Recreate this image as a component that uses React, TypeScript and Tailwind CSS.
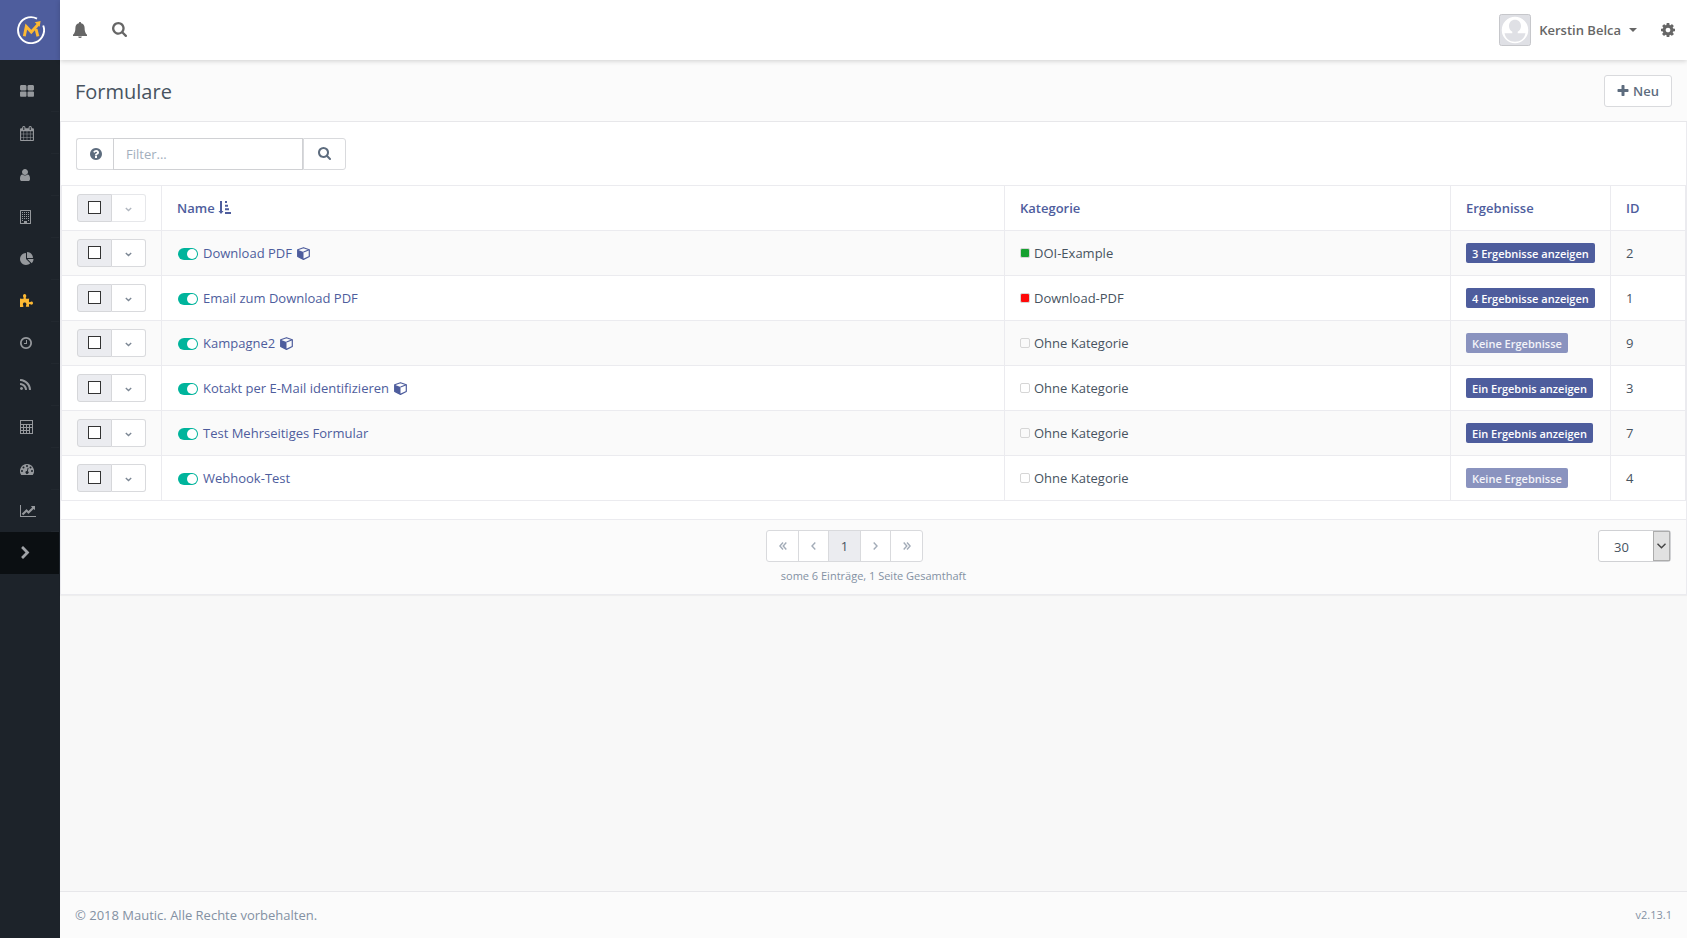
import type { ReactNode } from 'react'

type IconProps = { className?: string }

type FormRow = {
  id: number
  name: string
  cube?: boolean
  category: string
  color?: string
  label: string
  empty?: boolean
}

const rows: FormRow[] = [
  { id: 2, name: 'Download PDF', cube: true, category: 'DOI-Example', color: 'bg-[#15a02f]', label: '3 Ergebnisse anzeigen' },
  { id: 1, name: 'Email zum Download PDF', category: 'Download-PDF', color: 'bg-[#ff0909]', label: '4 Ergebnisse anzeigen' },
  { id: 9, name: 'Kampagne2', cube: true, category: 'Ohne Kategorie', label: 'Keine Ergebnisse', empty: true },
  { id: 3, name: 'Kotakt per E-Mail identifizieren', cube: true, category: 'Ohne Kategorie', label: 'Ein Ergebnis anzeigen' },
  { id: 7, name: 'Test Mehrseitiges Formular', category: 'Ohne Kategorie', label: 'Ein Ergebnis anzeigen' },
  { id: 4, name: 'Webhook-Test', category: 'Ohne Kategorie', label: 'Keine Ergebnisse', empty: true },
]

// Glyphs on the 1792 unit grid
const glyphs = {
  thLarge: 'M832 1024v384q0 52-38 90t-90 38h-512q-52 0-90-38t-38-90v-384q0-52 38-90t90-38h512q52 0 90 38t38 90zm0-768v384q0 52-38 90t-90 38h-512q-52 0-90-38t-38-90v-384q0-52 38-90t90-38h512q52 0 90 38t38 90zm896 768v384q0 52-38 90t-90 38h-512q-52 0-90-38t-38-90v-384q0-52 38-90t90-38h512q52 0 90 38t38 90zm0-768v384q0 52-38 90t-90 38h-512q-52 0-90-38t-38-90v-384q0-52 38-90t90-38h512q52 0 90 38t38 90z',
  calendar: 'M192 1664h288v-288h-288v288zm352 0h320v-288h-320v288zm-352-352h288v-320h-288v320zm352 0h320v-320h-320v320zm-352-384h288v-288h-288v288zm736 736h320v-288h-320v288zm-384-736h320v-288h-320v288zm768 736h288v-288h-288v288zm-384-352h320v-320h-320v320zm-352-864v-288q0-13-9.5-22.5t-22.5-9.5h-64q-13 0-22.5 9.5t-9.5 22.5v288q0 13 9.5 22.5t22.5 9.5h64q13 0 22.5-9.5t9.5-22.5zm736 864h288v-320h-288v320zm-384-384h320v-288h-320v288zm384 0h288v-288h-288v288zm32-480v-288q0-13-9.5-22.5t-22.5-9.5h-64q-13 0-22.5 9.5t-9.5 22.5v288q0 13 9.5 22.5t22.5 9.5h64q13 0 22.5-9.5t9.5-22.5zm384-64v1280q0 52-38 90t-90 38h-1408q-52 0-90-38t-38-90v-1280q0-52 38-90t90-38h128v-96q0-66 47-113t113-47h64q66 0 113 47t47 113v96h384v-96q0-66 47-113t113-47h64q66 0 113 47t47 113v96h128q52 0 90 38t38 90z',
  user: 'M1536 1399q0 109-62.5 187t-150.5 78h-854q-88 0-150.5-78t-62.5-187q0-85 8.5-160.5t31.5-152 58.5-131 94-89 134.5-34.5q131 128 313 128t313-128q76 0 134.5 34.5t94 89 58.5 131 31.5 152 8.5 160.5zm-256-887q0 159-112.5 271.5t-271.5 112.5-271.5-112.5-112.5-271.5 112.5-271.5 271.5-112.5 271.5 112.5 112.5 271.5z',
  pie: 'M768 890l546 546q-106 108-247.5 168t-298.5 60q-209 0-385.5-103t-279.5-279.5-103-385.5 103-385.5 279.5-279.5 385.5-103v762zm187 6h773q0 157-60 298.5t-168 247.5zm709-128h-768v-768q209 0 385.5 103t279.5 279.5 103 385.5z',
  clock: 'M1024 544v448q0 14-9 23t-23 9h-320q-14 0-23-9t-9-23v-64q0-14 9-23t23-9h224v-352q0-14 9-23t23-9h64q14 0 23 9t9 23zm416 352q0-148-73-273t-198-198-273-73-273 73-198 198-73 273 73 273 198 198 273 73 273-73 198-198 73-273zm224 0q0 209-103 385.5t-279.5 279.5-385.5 103-385.5-103-279.5-279.5-103-385.5 103-385.5 279.5-279.5 385.5-103 385.5 103 279.5 279.5 103 385.5z',
  rss: 'M576 1344q0 80-56 136t-136 56-136-56-56-136 56-136 136-56 136 56 56 136zm512 123q2 28-17 48-18 21-47 21h-135q-25 0-43-16.5t-20-41.5q-22-229-184.5-391.5t-391.5-184.5q-25-2-41.5-20t-16.5-43v-135q0-29 21-47 17-17 43-17h5q160 13 306 80.5t259 181.5q114 113 181.5 259t80.5 306zm512 2q2 27-18 47-18 20-46 20h-143q-26 0-44.5-17.5t-19.5-42.5q-12-215-101-408.5t-231.5-336-336-231.5-408.5-102q-25-1-42.5-19.5t-17.5-43.5v-143q0-28 20-46 18-18 44-18h3q262 13 501.5 120t425.5 294q187 186 294 425.5t120 501.5z',
  lineChart: 'M2048 1536v128h-2048v-1536h128v1408h1920zm-128-1248v435q0 21-19.5 29.5t-35.5-7.5l-121-121-633 633q-10 10-23 10t-23-10l-233-233-416 416-192-192 585-585q10-10 23-10t23 10l233 233 464-464-121-121q-16-16-7.5-35.5t29.5-19.5h435q14 0 23 9t9 23z',
  chevron: 'M1363 877l-742 742q-19 19-45 19t-45-19l-166-166q-19-19-19-45t19-45l531-531-531-531q-19-19-19-45t19-45l166-166q19-19 45-19t45 19l742 742q19 19 19 45t-19 45z',
  search: 'M1216 832q0-185-131.5-316.5t-316.5-131.5-316.5 131.5-131.5 316.5 131.5 316.5 316.5 131.5 316.5-131.5 131.5-316.5zm512 832q0 52-38 90t-90 38q-54 0-90-38l-343-342q-179 124-399 124-143 0-273.5-55.5t-225-150-150-225-55.5-273.5 55.5-273.5 150-225 225-150 273.5-55.5 273.5 55.5 225 150 150 225 55.5 273.5q0 220-124 399l343 343q37 37 37 90z',
  question: 'M1024 1376v-192q0-14-9-23t-23-9h-192q-14 0-23 9t-9 23v192q0 14 9 23t23 9h192q14 0 23-9t9-23zm256-672q0-88-55.5-163t-138.5-116-170-41q-243 0-371 213-15 24 8 42l132 100q7 6 19 6 16 0 25-12 53-68 86-92 34-24 86-24 48 0 85.5 26t37.5 59q0 38-20 61t-68 45q-63 28-115.5 86.5t-52.5 125.5v36q0 14 9 23t23 9h192q14 0 23-9t9-23q0-19 21.5-49.5t54.5-49.5q32-18 49-28.5t46-35 44.5-48 28-60.5 12.5-81zm384 192q0 209-103 385.5t-279.5 279.5-385.5 103-385.5-103-279.5-279.5-103-385.5 103-385.5 279.5-279.5 385.5-103 385.5 103 279.5 279.5 103 385.5z',
  plus: 'M1600 736v192q0 40-28 68t-68 28h-416v416q0 40-28 68t-68 28h-192q-40 0-68-28t-28-68v-416h-416q-40 0-68-28t-28-68v-192q0-40 28-68t68-28h416v-416q0-40 28-68t68-28h192q40 0 68 28t28 68v416h416q40 0 68 28t28 68z',
  cog: 'M1152 896q0-106-75-181t-181-75-181 75-75 181 75 181 181 75 181-75 75-181zm512-109v222q0 12-8 23t-20 13l-185 28q-19 54-39 91 35 50 107 138 10 12 10 25t-9 23q-27 37-99 108t-94 71q-12 0-26-9l-138-108q-44 23-91 38-16 136-29 186-7 28-36 28h-222q-14 0-24.5-8.5t-11.5-21.5l-28-184q-49-16-90-37l-141 107q-10 9-25 9-14 0-25-11-126-114-165-168-7-10-7-23 0-12 8-23 15-21 51-66.5t54-70.5q-27-50-41-99l-183-27q-13-2-21-12.5t-8-23.5v-222q0-12 8-23t19-13l186-28q14-46 39-92-40-57-107-138-10-12-10-24 0-10 9-23 26-36 98.5-107.5t94.5-71.5q13 0 26 10l138 107q44-23 91-38 16-136 29-186 7-28 36-28h222q14 0 24.5 8.5t11.5 21.5l28 184q49 16 90 37l142-107q9-9 24-9 13 0 25 10 129 119 165 170 7 8 7 22 0 12-8 23-15 21-51 66.5t-54 70.5q26 50 41 98l183 28q13 2 21 12.5t8 23.5z',
}

function Glyph({ d, box, className }: { d: string; box: string; className?: string }) {
  return (
    <svg viewBox={box} className={className} fill="currentColor" aria-hidden="true">
      <path d={d} />
    </svg>
  )
}

function Logo() {
  return (
    <svg viewBox="0 0 28 28" className="h-7 w-7" fill="none" aria-hidden="true">
      <path d="M20 2.600A13 13 0 1 0 26.200 9.500" stroke="#fff" strokeWidth="1.900" />
      <path d="M7.300 20.300 9.300 10.500l5 5.500 7-7.800" stroke="#fdb933" strokeWidth="2.900" />
      <path d="M17.700 6.200 23.600 5l-.9 5.800z" fill="#fdb933" />
      <path d="m19 13 1.900 7.300" stroke="#fdb933" strokeWidth="2.900" />
    </svg>
  )
}

function Bell({ className }: IconProps) {
  return (
    <svg viewBox="0 0 14 16" className={className} fill="currentColor" aria-hidden="true">
      <path d="M7 0c.7 0 1.1.5 1.1 1.200 2.200.5 3.500 2.200 3.500 4.500 0 3.300.6 5.300 2.400 7V14H0v-1.300c1.800-1.700 2.400-3.700 2.400-7 0-2.300 1.300-4 3.500-4.500C5.900.5 6.300 0 7 0zM5.200 14.400h3.600a1.800 1.600 0 0 1-3.600 0z" />
    </svg>
  )
}

function Building({ className }: IconProps) {
  return (
    <svg viewBox="0 0 11 14" className={className} fill="currentColor" aria-hidden="true">
      <path fillRule="evenodd" d="M0 .5Q0 0 .5 0h10q.5 0 .5.500v13q0 .5-.5.500H.5q-.5 0-.5-.5zM1 1v12h3v-2h3v2h3V1z" />
      {[2, 4, 6, 8].map((y) => (
        <path key={y} d={`M2 ${y}h1v1H2zm2 0h1v1H4zm2 0h1v1H6zm2 0h1v1H8z`} />
      ))}
      <path d="M2 10h1v1H2zm6 0h1v1H8z" />
    </svg>
  )
}

function Puzzle({ className }: IconProps) {
  return (
    <svg viewBox="0 0 13 14" className={className} fill="currentColor" aria-hidden="true">
      <path d="M0 4.500c1 .3 3 .5 3.600 0 .5-.6-.6-1.200-.6-2.500C3 .8 3.700 0 4.600 0S6.300.8 6.300 2c0 1.200-1 1.900-.4 2.500.7.5 2.300.2 3.300 0-.2 1.200-.5 2.900 0 3.600.5.5 1.200-.7 2.200-.7S13 8 13 9s-.6 1.700-1.600 1.700-1.600-.9-2.200-.5c-.4.4-.2 1.600 0 2.600H6.100c-.7-.5.3-1.200.3-2.500 0-1.100-.8-1.700-1.800-1.700s-1.700.6-1.700 1.700c0 1.300 1 1.900.4 2.500-.5.3-2.300.2-3.300.2z" />
    </svg>
  )
}

function Calculator({ className }: IconProps) {
  return (
    <svg viewBox="0 0 13 14" className={className} fill="currentColor" aria-hidden="true">
      <path fillRule="evenodd" d="M0 0h13v14H0zM1 1v3h11V1zM1 5v2h2V5zm3 0v2h2V5zm3 0v2h2V5zm3 0v2h2V5zM1 8v2h2V8zm3 0v2h2V8zm3 0v2h2V8zM1 11v2h2v-2zm3 0v2h2v-2zm3 0v2h2v-2zm3-3v5h2V8z" />
    </svg>
  )
}

function Gauge({ className }: IconProps) {
  return (
    <svg viewBox="0 -1 14 13" className={className} fill="currentColor" aria-hidden="true">
      <path
        fillRule="evenodd"
        d="M7 0a7 7 0 0 1 5.900 10.800q-.2.200-.5.200H1.600q-.3 0-.5-.2A7 7 0 0 1 7 0zM2 6a1 1 0 1 0 0 2 1 1 0 0 0 0-2zm1.500-3.500a1 1 0 1 0 0 2 1 1 0 0 0 0-2zM7 1a1 1 0 1 0 0 2 1 1 0 0 0 0-2zm3.500 1.500a1 1 0 1 0 0 2 1 1 0 0 0 0-2zM12 6a1 1 0 1 0 0 2 1 1 0 0 0 0-2zM7.700 3.800 6.900 7a1.500 1.500 0 1 0 .9.200l.8-3.200z"
      />
    </svg>
  )
}

function SortAsc({ className }: IconProps) {
  return (
    <svg viewBox="0 0 13 14" className={className} fill="currentColor" aria-hidden="true">
      <path d="M2 0h2v10h1.500L3 13 .5 10H2zM7 0h2v2H7zm0 3.700h3v2H7zm0 3.600h4v2H7zM7 11h6v2H7z" />
    </svg>
  )
}

function Toggle() {
  return (
    <svg viewBox="0 0 20 13" className="h-[13px] w-5" aria-hidden="true">
      <rect y="1" width="20" height="12" rx="6" fill="#00b49c" />
      <circle cx="14" cy="7" r="5" fill="#fff" />
    </svg>
  )
}

function Cube() {
  return (
    <svg viewBox="0 0 13 13" className="h-[13px] w-[13px]" aria-hidden="true">
      <path d="M6.500.7 12.300 2.800v6.700l-5.800 2.900L.7 9.500V2.800z" fill="none" stroke="currentColor" strokeWidth="1.200" strokeLinejoin="round" />
      <path d="M.6 2.800 6.500 5v7.500L.6 9.600z" fill="currentColor" />
      <path d="M6.500 5l5.800-2.200" stroke="currentColor" strokeWidth="1.200" />
    </svg>
  )
}

function Angle({ d, box, className }: { d: string; box: string; className?: string }) {
  return (
    <svg viewBox={box} className={className} fill="none" stroke="currentColor" strokeWidth="1.400" aria-hidden="true">
      <path d={d} />
    </svg>
  )
}

function Avatar() {
  return (
    <svg viewBox="0 0 32 32" className="h-8 w-8" aria-hidden="true">
      <rect x=".5" y=".5" width="31" height="31" rx="2" fill="#dfe0e5" stroke="#c6c7cb" />
      <circle cx="16" cy="16" r="12.500" fill="#fff" stroke="#fff" strokeWidth="1.500" />
      <path d="M16 5.800c3.600 0 6 2.600 6 6.200 0 2.600-1.300 4.600-3.300 5.800v1.400h7.800c-1 5-5 8.500-10.500 8.500S6.500 24.200 5.500 19.200h7.800v-1.400C11.300 16.600 10 14.600 10 12c0-3.600 2.400-6.200 6-6.200z" fill="#dfe0e5" />
    </svg>
  )
}

const navItems: { title: string; icon: ReactNode; active?: boolean }[] = [
  { title: 'Dashboard', icon: <Glyph d={glyphs.thLarge} box="64 0 1664 1792" className="h-[15px] w-3.5" /> },
  { title: 'Kalender', icon: <Glyph d={glyphs.calendar} box="64 0 1664 1792" className="h-[15px] w-3.5" /> },
  { title: 'Kontakte', icon: <Glyph d={glyphs.user} box="256 0 1280 1792" className="h-3.5 w-2.5" /> },
  { title: 'Unternehmen', icon: <Building className="h-3.5 w-[11px]" /> },
  { title: 'Segmente', icon: <Glyph d={glyphs.pie} box="0 0 1792 1792" className="h-3.5 w-3.5" /> },
  { title: 'Komponenten', icon: <Puzzle className="h-3.5 w-[13px]" />, active: true },
  { title: 'Kampagnen', icon: <Glyph d={glyphs.clock} box="128 0 1536 1792" className="h-3.5 w-3" /> },
  { title: 'Kanäle', icon: <Glyph d={glyphs.rss} box="192 0 1408 1792" className="h-3.5 w-[11px]" /> },
  { title: 'Punkte', icon: <Calculator className="h-3.5 w-[13px]" /> },
  { title: 'Stufen', icon: <Gauge className="h-[13px] w-3.5" /> },
  { title: 'Berichte', icon: <Glyph d={glyphs.lineChart} box="0 0 2048 1792" className="h-3.5 w-4" /> },
]

function Sidebar() {
  return (
    <aside className="flex w-[60px] shrink-0 flex-col bg-[#1d232a]">
      <a href="#" aria-label="Mautic" className="flex h-[60px] items-center justify-center bg-[#4e5d9d] pl-0.5">
        <Logo />
      </a>
      <nav className="flex flex-col pt-2.5 pr-px">
        {navItems.map((item) => (
          <a
            key={item.title}
            href="#"
            aria-label={item.title}
            className={`flex h-[42px] items-center pl-5 ${item.active ? 'text-[#fdb933]' : 'text-[#96999d]'}`}
          >
            {item.icon}
            <span className="ml-auto w-2 self-end border-b border-[#22282f]" />
          </a>
        ))}
        <button type="button" aria-label="Menü ausklappen" className="flex h-[42px] items-center bg-[#0b0f12] pl-[21px] text-[#a0a3a7]">
          <Glyph d={glyphs.chevron} box="320 0 1152 1792" className="h-3.5 w-[9px]" />
        </button>
      </nav>
    </aside>
  )
}

function TopBar() {
  return (
    <header className="relative flex h-[60px] items-center bg-white pr-3 pb-px pl-[13px] text-[#666] shadow-[0_1px_5px_rgba(0,0,0,0.18)]">
      <button type="button" aria-label="Benachrichtigungen">
        <Bell className="h-4 w-3.5" />
      </button>
      <button type="button" aria-label="Suche" className="ml-[25px]">
        <Glyph d={glyphs.search} box="64 128 1664 1664" className="h-[15px] w-[15px]" />
      </button>
      <button type="button" className="ml-auto flex items-center pt-px text-[13px] font-semibold">
        <Avatar />
        <span className="ml-2">Kerstin Belca</span>
        <svg viewBox="0 0 8 4" className="ml-2 h-1 w-2" fill="currentColor" aria-hidden="true">
          <path d="M0 0h8L4 4z" />
        </svg>
      </button>
      <button type="button" aria-label="Einstellungen" className="ml-6">
        <Glyph d={glyphs.cog} box="128 128 1536 1536" className="h-3.5 w-3.5" />
      </button>
    </header>
  )
}

function RowActions({ label, disabled }: { label: string; disabled?: boolean }) {
  return (
    <div className="flex h-7 w-[69px]">
      <label className="flex w-[35px] items-center justify-center rounded-l-[3px] border border-[#d6d7da] bg-[#ebecf0] pb-px">
        <input
          type="checkbox"
          aria-label={label}
          className="h-[13px] w-[13px] appearance-none border border-[#333] bg-white checked:bg-[#4e5d9d]"
        />
      </label>
      <button
        type="button"
        aria-label={`${label} Optionen`}
        disabled={disabled}
        className={`flex flex-1 items-center justify-center rounded-r-[3px] border border-l-0 bg-white ${
          disabled ? 'border-[#e6e7ea] text-[#b0b6bf]' : 'border-[#d9dadd] text-[#7c8794]'
        }`}
      >
        <Angle box="0 0 7 5" d="m.8 1 2.700 2.500L6.200 1" className="mt-0.5 h-[5px] w-[7px]" />
      </button>
    </div>
  )
}

function FormTable() {
  return (
    <table className="w-full table-fixed border-separate border-spacing-0 border-x border-t border-[#ebebef] text-left">
      <thead>
        <tr className="h-[45px] text-[#4e5d9d] *:border-b *:border-[#ebebef] *:font-semibold">
          <th className="w-[100px] border-r pl-[15px]">
            <RowActions label="Alle auswählen" disabled />
          </th>
          <th className="border-r pl-[15px]">
            <a href="#" className="flex items-center gap-[3px]">
              Name
              <SortAsc className="h-3.5 w-[13px]" />
            </a>
          </th>
          <th className="w-[446px] border-r pl-[15px]">
            <a href="#">Kategorie</a>
          </th>
          <th className="w-[160px] border-r pl-[15px]">
            <a href="#">Ergebnisse</a>
          </th>
          <th className="w-[74px] pl-[15px]">
            <a href="#">ID</a>
          </th>
        </tr>
      </thead>
      <tbody>
        {rows.map((row) => (
          <tr key={row.id} className="h-[45px] odd:bg-[#fafafa] *:border-b *:border-[#ebebef] *:pl-[15px]">
            <td className="border-r">
              <RowActions label={row.name} />
            </td>
            <td className="border-r">
              <div className="flex items-center gap-[5px] pl-px text-[#4e5d9d]">
                <Toggle />
                <a href="#" className="flex items-center gap-[5px]">
                  {row.name}
                  {row.cube && <Cube />}
                </a>
              </div>
            </td>
            <td className="border-r">
              <div className="flex items-center gap-1">
                <span className={`h-2.5 w-2.5 rounded-[2px] border border-[#d6d6d6] ${row.color ?? ''}`} />
                {row.category}
              </div>
            </td>
            <td className="border-r">
              <a
                href="#"
                className={`flex h-5 w-fit items-center rounded-[2px] px-1.5 pt-0.5 text-[11px] font-semibold whitespace-nowrap ${
                  row.empty ? 'bg-[#8a93bf] text-[#f3f4f9]' : 'bg-[#4e5d9d] text-white'
                }`}
              >
                {row.label}
              </a>
            </td>
            <td>{row.id}</td>
          </tr>
        ))}
      </tbody>
    </table>
  )
}

function Pagination() {
  return (
    <div className="mx-auto w-[215px]">
      <div className="flex h-8 w-[157px] divide-x divide-[#d9dadd] overflow-hidden rounded-[3px] border border-[#d9dadd] bg-white text-[#a3acb8] *:flex *:items-center *:justify-center">
        <button type="button" aria-label="Erste Seite" className="w-8">
          <Angle box="0 0 8 8" d="M4 .5.900 4 4 7.500M7.300.5 4.200 4l3.100 3.500" className="h-2 w-2" />
        </button>
        <button type="button" aria-label="Vorherige Seite" className="w-[30px]">
          <Angle box="0 0 5 8" d="M4.300.5 1 4l3.300 3.500" className="h-2 w-[5px]" />
        </button>
        <button type="button" aria-current="page" className="w-8 bg-[#ebecf0] text-[#47535f]">
          1
        </button>
        <button type="button" aria-label="Nächste Seite" className="w-[30px]">
          <Angle box="0 0 5 8" d="M.7.500 4 4 .7 7.500" className="h-2 w-[5px]" />
        </button>
        <button type="button" aria-label="Letzte Seite" className="flex-1">
          <Angle box="0 0 8 8" d="M.7.500 3.800 4 .7 7.500M4 .5 7.100 4 4 7.500" className="h-2 w-2" />
        </button>
      </div>
      <p className="mt-1.5 text-center text-[11px] leading-4 text-[#8391a3]">some 6 Einträge, 1 Seite Gesamthaft</p>
    </div>
  )
}

export default function App() {
  return (
    <div className="flex min-h-screen bg-[#f8f8f8] font-['Open_Sans','Noto_Sans',sans-serif] text-[13px] leading-5 text-[#47535f]">
      <Sidebar />
      <div className="flex min-w-0 flex-1 flex-col">
        <TopBar />
        <div className="flex h-[62px] items-center justify-between border-b border-[#e7e7ea] bg-[#fbfbfb] px-[15px]">
          <h1 className="pt-0.5 text-[20px] leading-6">Formulare</h1>
          <a
            href="#"
            className="flex h-8 items-center gap-1 rounded-[3px] border border-[#d9dadd] bg-white px-3 font-semibold text-[#5d6c7e]"
          >
            <Glyph d={glyphs.plus} box="192 128 1408 1536" className="h-3 w-3" />
            Neu
          </a>
        </div>

        <main>
          <section className="border-x border-b border-[#ebebef] bg-white shadow-[0_1px_1px_rgba(0,0,0,0.04)]">
            <form className="flex h-[63px] items-center px-[15px]" onSubmit={(e) => e.preventDefault()}>
              <button
                type="button"
                aria-label="Hilfe"
                className="flex h-8 w-[37px] items-center justify-center rounded-l-[3px] border border-r-0 border-[#d9dadd] pl-px text-[#5d6c7e]"
              >
                <Glyph d={glyphs.question} box="128 128 1536 1536" className="h-3 w-3" />
              </button>
              <input
                type="text"
                aria-label="Filter"
                placeholder="Filter..."
                className="h-8 w-[190px] border border-[#d0d1d4] px-3 outline-none placeholder:text-[#a3afbd]"
              />
              <button
                type="submit"
                aria-label="Suchen"
                className="flex h-8 w-[43px] items-center justify-center rounded-r-[3px] border border-[#d9dadd] text-[#5d6c7e]"
              >
                <Glyph d={glyphs.search} box="64 128 1664 1664" className="h-[13px] w-[13px]" />
              </button>
            </form>

            <FormTable />

            <div className="mt-[18px] flex h-[75px] border-t border-[#ebebef] bg-[#fbfbfb] px-[15px] pt-2.5">
              <div className="w-[73px]" />
              <Pagination />
              <div className="relative h-8 w-[73px]">
                <select
                  aria-label="Einträge pro Seite"
                  defaultValue="30"
                  className="h-8 w-full appearance-none rounded-[3px] border border-[#d0d1d4] bg-white pt-0.5 pl-[15px] outline-none"
                >
                  <option>5</option>
                  <option>10</option>
                  <option>15</option>
                  <option>20</option>
                  <option>25</option>
                  <option>30</option>
                  <option>50</option>
                  <option>100</option>
                </select>
                <span className="pointer-events-none absolute top-px right-px bottom-px flex w-[17px] items-center justify-center border border-[#acacac] bg-[#e1e1e1] text-[#444]">
                  <Angle box="0 0 9 6" d="m.5.800 4 4 4-4" className="h-1.5 w-[9px]" />
                </span>
              </div>
            </div>
          </section>
        </main>

        <footer className="mt-auto flex h-[47px] items-center justify-between border-t border-[#e7e7ea] bg-[#fbfbfb] px-[15px] text-[#8391a3]">
          <span>© 2018 Mautic. Alle Rechte vorbehalten.</span>
          <span className="text-[11px]">v2.13.1</span>
        </footer>
      </div>
    </div>
  )
}
